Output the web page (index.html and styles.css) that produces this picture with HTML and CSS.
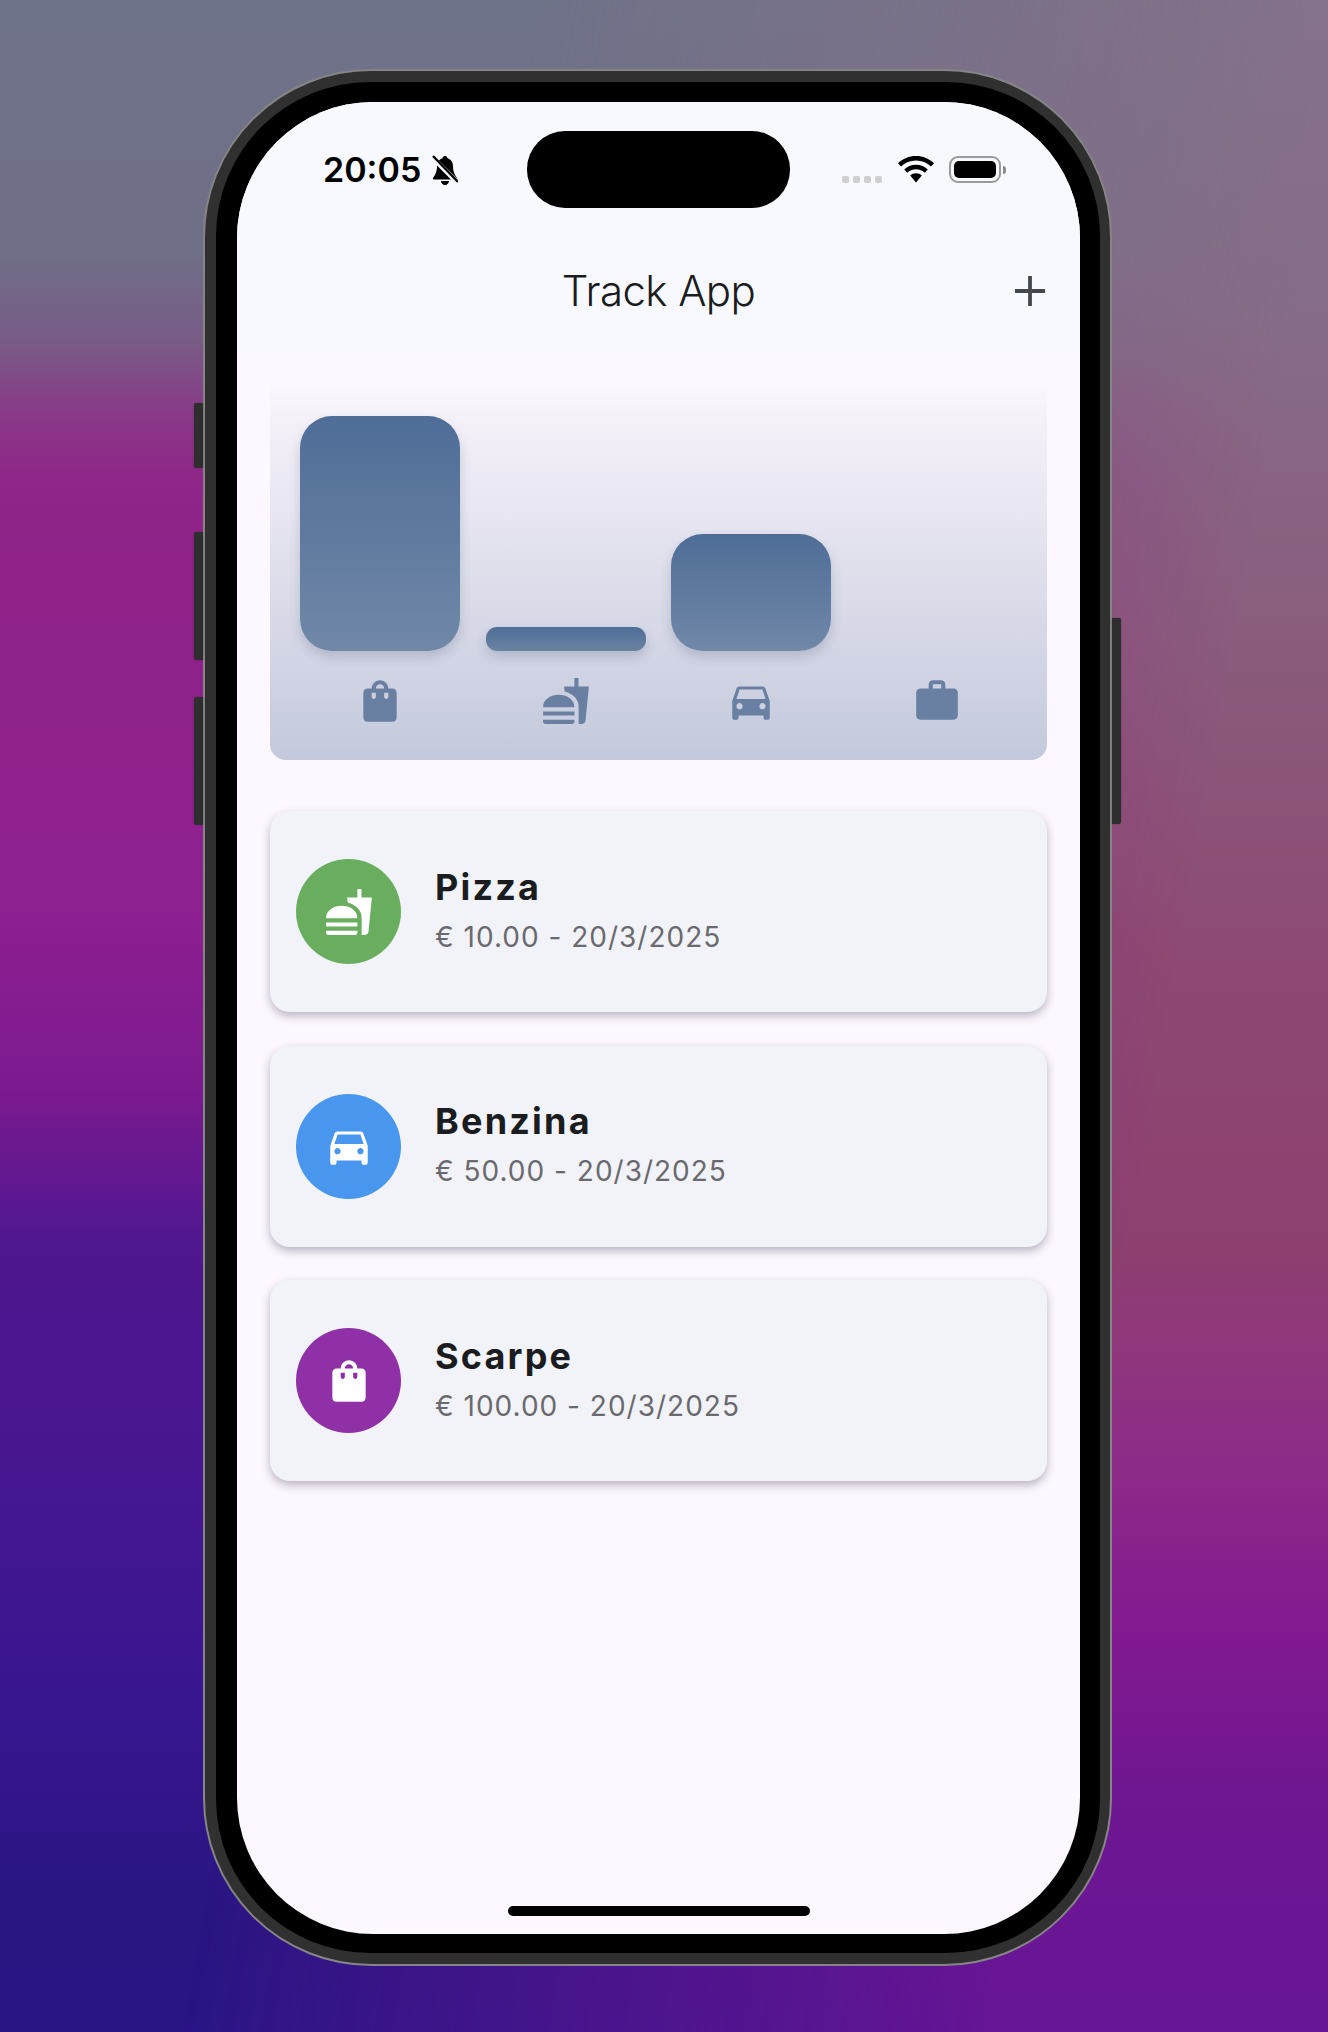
FILE: index.html
```html
<!DOCTYPE html>
<html lang="it">
<head>
<meta charset="utf-8">
<title>Track App</title>
<link rel="stylesheet" href="styles.css">
</head>
<body>
<svg class="defs" width="0" height="0" aria-hidden="true">
  <defs>
    <symbol id="i-bag" viewBox="0 0 24 24"><path fill-rule="evenodd" d="M18 6h-2c0-2.21-1.79-4-4-4S8 3.79 8 6H6c-1.1 0-2 .9-2 2v12c0 1.1.9 2 2 2h12c1.1 0 2-.9 2-2V8c0-1.1-.9-2-2-2zm-8 4c0 .55-.45 1-1 1s-1-.45-1-1V8h2v2zm2-6c1.1 0 2 .9 2 2h-4c0-1.1.9-2 2-2zm4 6c0 .55-.45 1-1 1s-1-.45-1-1V8h2v2z"/></symbol>
    <symbol id="i-food" viewBox="0 0 24 24"><path d="M18.06 22.99h1.66c.84 0 1.53-.64 1.63-1.46L23 5.05h-5V1h-1.97v4.05h-4.97l.3 2.34c1.71.47 3.31 1.31 4.27 2.25 1.44 1.42 2.43 2.89 2.43 5.29v8.05zM1 21.99V21h15.03v.99c0 .55-.45 1-1.01 1H2.01c-.56 0-1.01-.45-1.01-1zm15.03-7c0-8-15.03-8-15.03 0h15.03zM1.02 17h15v2h-15z"/></symbol>
    <symbol id="i-car" viewBox="0 0 24 24"><path fill-rule="evenodd" d="M18.92 6.01C18.72 5.42 18.16 5 17.5 5h-11c-.66 0-1.21.42-1.42 1.01L3 12v8c0 .55.45 1 1 1h1c.55 0 1-.45 1-1v-1h12v1c0 .55.45 1 1 1h1c.55 0 1-.45 1-1v-8l-2.08-5.99zM6.5 16c-.83 0-1.5-.67-1.5-1.5S5.67 13 6.5 13s1.5.67 1.5 1.5S7.33 16 6.5 16zm11 0c-.83 0-1.5-.67-1.5-1.5s.67-1.5 1.5-1.5 1.5.67 1.5 1.5-.67 1.5-1.5 1.5zM5 11l1.5-4.5h11L19 11H5z"/></symbol>
    <symbol id="i-work" viewBox="0 0 24 24"><path fill-rule="evenodd" d="M20 6h-4V4c0-1.11-.89-2-2-2h-4c-1.11 0-2 .89-2 2v2H4c-1.11 0-1.99.89-1.99 2L2 19c0 1.11.89 2 2 2h16c1.11 0 2-.89 2-2V8c0-1.11-.89-2-2-2zm-6 0h-4V4h4v2z"/></symbol>
  </defs>
</svg>
<main class="desktop">
  <div class="phone">
    <span class="side-btn btn-mute"></span>
    <span class="side-btn btn-up"></span>
    <span class="side-btn btn-down"></span>
    <span class="side-btn btn-power"></span>
    <div class="bezel">
      <div class="screen">
        <div class="island"></div>
        <header class="topbar">
          <div class="status">
            <div class="status-left">
              <span class="time">20:05</span>
              <svg class="bell" viewBox="0 0 26 30"><path d="M13 1c-1.600 0-2.400 1-2.500 2.300C6.800 4.300 5 7.500 5 11.500c0 4-1.200 8-4 11.500-.4.800 0 1.500 1 1.500h22c1 0 1.400-.7 1-1.500-2.800-3.500-4-7.500-4-11.500 0-4-1.800-7.200-5.500-8.200C15.400 2 14.600 1 13 1z"/><path d="M9 26h8c0 2.200-1.800 4-4 4s-4-1.800-4-4z"/><path class="bell-gap" d="M-1 1 27 29"/><path class="bell-line" d="M1 1 26 27"/></svg>
            </div>
            <div class="status-right">
              <div class="signal"><i></i><i></i><i></i><i></i></div>
              <svg class="wifi" viewBox="0 0 36 27"><path d="M18 0C11 0 4.800 2.700 0 7.200l3 3.300C7 6.700 12.200 4.500 18 4.500s11 2.200 15 6l3-3.300C31.200 2.700 25 0 18 0z"/><path d="M18 8.700c-4.600 0-8.700 1.800-11.800 4.700l3 3.300c2.300-2.100 5.400-3.500 8.800-3.500s6.500 1.400 8.800 3.500l3-3.300c-3.100-2.900-7.200-4.700-11.800-4.700z"/><path d="M18 17.200c-2.300 0-4.300.9-5.800 2.300L18 26.500l5.800-7c-1.500-1.400-3.500-2.300-5.800-2.300z"/></svg>
              <div class="battery"><div class="battery-body"><div class="battery-fill"></div></div><span class="battery-nub"></span></div>
            </div>
          </div>
          <div class="titlebar">
            <h1 class="title">Track App</h1>
            <svg class="plus" viewBox="0 0 30 30"><path d="M15 0v30M0 15h30"/></svg>
          </div>
        </header>
        <section class="content">
          <div class="chart">
            <div class="bars">
              <div class="bar-slot"><div class="bar bar-shop"></div></div>
              <div class="bar-slot"><div class="bar bar-food"></div></div>
              <div class="bar-slot"><div class="bar bar-car"></div></div>
              <div class="bar-slot"></div>
            </div>
            <div class="chart-icons">
              <svg class="icon"><use href="#i-bag"/></svg>
              <svg class="icon"><use href="#i-food"/></svg>
              <svg class="icon"><use href="#i-car"/></svg>
              <svg class="icon"><use href="#i-work"/></svg>
            </div>
          </div>
          <ul class="list">
            <li class="card">
              <span class="avatar avatar-green"><svg class="icon"><use href="#i-food"/></svg></span>
              <div class="card-text">
                <span class="card-title">Pizza</span>
                <span class="card-sub">€ 10.00 - 20/3/2025</span>
              </div>
            </li>
            <li class="card">
              <span class="avatar avatar-blue"><svg class="icon"><use href="#i-car"/></svg></span>
              <div class="card-text">
                <span class="card-title">Benzina</span>
                <span class="card-sub">€ 50.00 - 20/3/2025</span>
              </div>
            </li>
            <li class="card">
              <span class="avatar avatar-purple"><svg class="icon"><use href="#i-bag"/></svg></span>
              <div class="card-text">
                <span class="card-title">Scarpe</span>
                <span class="card-sub">€ 100.00 - 20/3/2025</span>
              </div>
            </li>
          </ul>
        </section>
        <div class="home-indicator"></div>
      </div>
    </div>
  </div>
</main>
</body>
</html>
```
FILE: styles.css
```css
* { box-sizing: border-box; }
html, body { margin: 0; padding: 0; }
body {
  position: relative;
  width: 1328px;
  height: 2032px;
  overflow: hidden;
  font-family: Inter, "Liberation Sans", sans-serif;
  background: linear-gradient(180deg,
    #6f7389 0, #6f6f88 250px, #785c86 340px, #8a3788 420px, #8f2688 480px, #8f2188 560px,
    #8f2090 900px, #7c1a90 1090px, #4f1790 1240px, #481790 1450px,
    #381690 1700px, #2a1582 1900px, #2a1585 2032px);
}
body::before {
  content: "";
  position: absolute;
  inset: 0;
  background: linear-gradient(180deg,
    #85718a 0, #866d88 300px, #8a5c7c 650px, #8d4a72 950px, #8e3f70 1250px,
    #8f2f86 1430px, #831a90 1620px, #6f1692 1800px, #651595 2032px);
  -webkit-mask-image: linear-gradient(100deg, transparent 32%, #000 80%);
  mask-image: linear-gradient(100deg, transparent 32%, #000 80%);
}
.defs { position: absolute; }
.desktop { position: relative; padding: 69px 0 0 203px; }
.phone {
  position: relative;
  width: 909px;
  height: 1897px;
  padding: 11px 10px 11px 11px;
  background: #303030;
  border: 2px solid #858585;
  border-radius: 168px;
}
.side-btn {
  position: absolute;
  width: 9px;
  background: #2e2e2e;
  border-radius: 2px 0 0 2px;
  box-shadow: 0 0 2px rgba(0,0,0,.25);
}
.btn-mute { left: -11px; top: 332px; height: 65px; }
.btn-up { left: -11px; top: 461px; height: 128px; }
.btn-down { left: -11px; top: 626px; height: 128px; }
.btn-power { right: -11px; top: 547px; height: 206px; border-radius: 0 2px 2px 0; }
.bezel {
  height: 100%;
  padding: 20px 20px 19px 21px;
  background: #000;
  border-radius: 154px;
}
.screen {
  position: relative;
  height: 100%;
  display: flex;
  flex-direction: column;
  overflow: hidden;
  background: #fdf8ff;
  border-radius: 136px;
}
.island {
  position: absolute;
  top: 29px;
  left: 290px;
  width: 263px;
  height: 77px;
  background: #000;
  border-radius: 38px;
}
.topbar { height: 250px; background: #f8f9ff; flex: none; }
.status {
  height: 151px;
  padding: 51px 74px 0 86px;
  display: flex;
  justify-content: space-between;
  align-items: flex-start;
}
.status-left { display: flex; align-items: center; gap: 11px; }
.time { font-size: 34px; line-height: 34px; font-weight: 600; color: #000; }
.bell { width: 26px; height: 30px; fill: #000; }
.bell-gap { stroke: #f8f9ff; stroke-width: 5; }
.bell-line { stroke: #000; stroke-width: 2.4; }
.status-right { display: flex; align-items: flex-start; }
.signal { display: flex; gap: 4px; margin: 23px 16px 0 0; }
.signal i { width: 7px; height: 7px; border-radius: 2px; background: #cfcfd1; }
.wifi { width: 36px; height: 27px; fill: #000; margin: 3px 15px 0 0; }
.battery { display: flex; align-items: center; height: 27px; margin-top: 3px; }
.battery-body {
  width: 52px;
  height: 27px;
  padding: 3px;
  border: 2px solid #9a9a9c;
  border-radius: 9px;
}
.battery-fill { height: 100%; background: #000; border-radius: 5px; }
.battery-nub { width: 3px; height: 8px; margin-left: 2px; background: #8a8a8c; border-radius: 0 3px 3px 0; }
.titlebar {
  position: relative;
  height: 76px;
  display: flex;
  align-items: center;
  justify-content: center;
}
.title { margin: 0; font-size: 42px; line-height: 76px; font-weight: 350; color: #1b1c20; letter-spacing: -.6px; }
.plus {
  position: absolute;
  right: 35px;
  top: 23px;
  width: 30px;
  height: 30px;
  fill: none;
  stroke: #44474e;
  stroke-width: 3.8;
}
.content { flex: 1; padding: 0 33px; display: flex; flex-direction: column; }
.chart {
  height: 408px;
  padding: 64px 30px 0;
  background: linear-gradient(180deg, #fdf8ff 7%, #f5f1f9 16%, #c3c9dc 100%);
  border-radius: 0 0 16px 16px;
}
.bars { height: 235px; display: flex; justify-content: space-between; align-items: flex-end; }
.bar-slot { width: 160px; height: 100%; display: flex; align-items: flex-end; }
.bar {
  width: 100%;
  background: linear-gradient(180deg, #4e6d97 0%, #7188a8 100%);
  box-shadow: 0 6px 12px rgba(40,50,80,.18);
}
.bar-shop { height: 235px; border-radius: 32px; }
.bar-food { height: 24px; border-radius: 11px; background: linear-gradient(180deg, #4e6d97 0%, #6a83a3 100%); }
.bar-car { height: 117px; border-radius: 32px; }
.chart-icons { display: flex; justify-content: space-between; margin-top: 25px; }
.chart-icons .icon { width: 160px; height: 50px; fill: #6a80a2; }
.list { list-style: none; margin: 51px 0 0; padding: 0; display: flex; flex-direction: column; gap: 33.5px; }
.card {
  height: 201px;
  padding: 0 26px;
  display: flex;
  align-items: center;
  gap: 34px;
  background: #f2f3f9;
  border-radius: 20px;
  box-shadow: 0 4px 10px rgba(30,20,50,.3);
}
.avatar {
  flex: none;
  width: 105px;
  height: 105px;
  display: flex;
  align-items: center;
  justify-content: center;
  border-radius: 50%;
}
.avatar .icon { width: 50px; height: 50px; fill: #fff; }
.avatar-green { background: #68ae5e; }
.avatar-blue { background: #4896ee; }
.avatar-purple { background: #9030a6; }
.card-text { display: flex; flex-direction: column; gap: 10px; padding-bottom: 6px; }
.card-title { font-size: 36px; line-height: 46px; font-weight: 650; color: #1b1c20; letter-spacing: 2.2px; }
.card-sub { font-size: 28px; line-height: 34px; color: #6a6a6e; letter-spacing: 1px; }
.home-indicator {
  position: absolute;
  left: 271px;
  bottom: 18px;
  width: 302px;
  height: 10px;
  background: #000;
  border-radius: 5px;
}
```
